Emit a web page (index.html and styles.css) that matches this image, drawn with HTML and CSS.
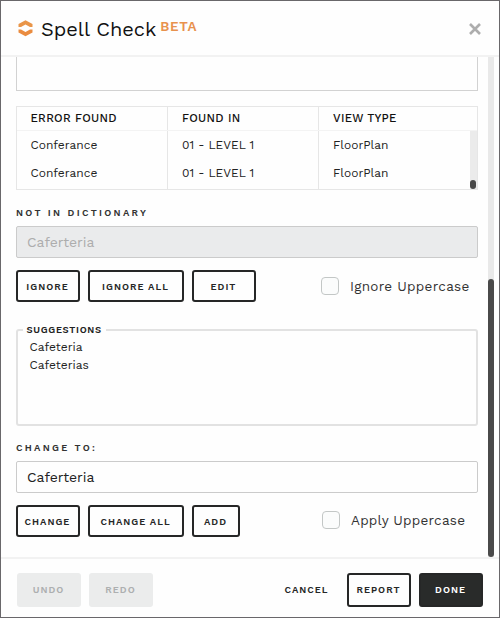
FILE: index.html
```html
<!DOCTYPE html>
<html lang="en">

<head>
  <meta charset="UTF-8">
  <meta name="viewport" content="width=device-width, initial-scale=1">
  <title>Spell Check</title>
  <link rel="stylesheet" href="styles.css">
</head>

<body>
  <div class="dialog">
    <header class="dialog-header">
      <svg class="logo" viewBox="0 0 15 17" aria-hidden="true">
        <path d="M0.5 7V4L7.5 0.3L14.5 4V7H12L7.5 4.6L3 7Z" fill="#e99549" />
        <path d="M0.5 9.4H3L7.5 12L12 9.4H14.5V12.4L7.5 16.3L0.5 12.4Z" fill="#ea8c40" />
      </svg>
      <h1>Spell Check</h1>
      <span class="beta">BETA</span>
      <button class="close" aria-label="Close">
        <svg viewBox="0 0 12 12"><path d="M1 1L11 11M11 1L1 11" /></svg>
      </button>
    </header>

    <div class="dialog-body">
      <main class="content">
        <div class="text-area"></div>

        <div class="table">
          <div class="row head">
            <span>ERROR FOUND</span>
            <span>FOUND IN</span>
            <span>VIEW TYPE</span>
          </div>
          <div class="table-scroll">
            <div class="rows">
              <div class="row">
                <span>Conferance</span>
                <span>01 - LEVEL 1</span>
                <span>FloorPlan</span>
              </div>
              <div class="row">
                <span>Conferance</span>
                <span>01 - LEVEL 1</span>
                <span>FloorPlan</span>
              </div>
            </div>
            <div class="table-track"><div class="table-thumb"></div></div>
          </div>
        </div>

        <div class="label not-in">NOT IN DICTIONARY</div>
        <div class="input disabled">Caferteria</div>

        <div class="actions">
          <button class="btn">IGNORE</button>
          <button class="btn wide">IGNORE ALL</button>
          <button class="btn">EDIT</button>
          <label class="check ignore-check"><span class="box"></span>Ignore Uppercase</label>
        </div>

        <fieldset class="suggestions">
          <legend>SUGGESTIONS</legend>
          <ul>
            <li>Cafeteria</li>
            <li>Cafeterias</li>
          </ul>
        </fieldset>

        <div class="label change-to">CHANGE TO:</div>
        <div class="input">Caferteria</div>

        <div class="actions">
          <button class="btn">CHANGE</button>
          <button class="btn wide">CHANGE ALL</button>
          <button class="btn small">ADD</button>
          <label class="check apply-check"><span class="box"></span>Apply Uppercase</label>
        </div>
      </main>
      <div class="track"><div class="thumb"></div></div>
    </div>

    <footer class="dialog-footer">
      <button class="btn muted">UNDO</button>
      <button class="btn muted">REDO</button>
      <button class="btn plain">CANCEL</button>
      <button class="btn">REPORT</button>
      <button class="btn solid">DONE</button>
    </footer>
  </div>
</body>

</html>
```
FILE: styles.css
```css
/* Reset */

*,
*::before,
*::after {
  box-sizing: border-box;
  margin: 0;
  padding: 0;
}

/* Variables */

:root {
  --dark: #262727;
  --line: #d2d2d2;
  --light-line: #e6e6e6;
  --muted: #ebecec;
  --orange: #e8924e;
}

body {
  font-family: "Work Sans", Inter, "Liberation Sans", sans-serif;
  background: #fff;
  color: #222;
}

button {
  font-family: inherit;
  background: none;
  border: none;
}

/* Dialog */

.dialog {
  display: flex;
  flex-direction: column;
  width: 500px;
  height: 618px;
  border: 1px solid #69676a;
  background: #fefefe;
}

.dialog-header {
  display: flex;
  align-items: center;
  height: 56px;
  padding: 0 17px;
  border-bottom: 2px solid #f2f2f2;
}

.logo {
  width: 15px;
  height: 17px;
}

.dialog-header h1 {
  margin-left: 8px;
  padding-top: 1px;
  font-size: 20px;
  font-weight: 400;
  line-height: 24px;
  letter-spacing: 0;
  color: #111;
}

.beta {
  margin: 0 auto 5px 4px;
  font-size: 13.5px;
  font-weight: 600;
  line-height: 16px;
  letter-spacing: 0.7px;
  color: var(--orange);
}

.close {
  width: 12px;
  height: 12px;
  margin: 2px 1px 0 0;
}

.close svg {
  display: block;
  fill: none;
  stroke: #adadad;
  stroke-width: 2.6;
}

/* Scrolling body */

.dialog-body {
  display: flex;
  flex: 1;
  min-height: 0;
  overflow: hidden;
}

.content {
  width: 477px;
  padding-left: 15px;
}

.track {
  width: 6px;
  margin-left: 10px;
  background: #e9e9e9;
}

.thumb {
  height: 278px;
  margin-top: 222px;
  border-radius: 3px;
  background: #4a4a4a;
}

.text-area {
  height: 34px;
  border: 1px solid var(--line);
  border-top: none;
}

/* Results table */

.table {
  height: 84px;
  margin-top: 15px;
  border: 1px solid var(--light-line);
}

.row {
  display: grid;
  grid-template-columns: 151px 151px 1fr;
  height: 28px;
  font-size: 12px;
  line-height: 28px;
}

.row span {
  padding-left: 14px;
  border-right: 1px solid var(--light-line);
}

.row span:first-child {
  padding-left: 13.5px;
}

.row span:last-child {
  border-right: none;
}

.row.head {
  height: 24px;
  line-height: 23px;
  font-size: 11.5px;
  font-weight: 500;
  letter-spacing: 0.3px;
  color: #111;
  border-bottom: 1px solid #f3f3f3;
}

.table-scroll {
  display: flex;
  height: 58px;
}

.rows {
  flex: 1;
}

.rows .row:last-child {
  height: 30px;
}

.table-track {
  display: flex;
  align-items: flex-end;
  width: 7px;
  background: #ebebeb;
}

.table-thumb {
  width: 6px;
  height: 9px;
  border-radius: 3px;
  background: #484848;
}

/* Fields */

.label {
  height: 12px;
  font-size: 9.5px;
  font-weight: 600;
  line-height: 12px;
  letter-spacing: 2.3px;
  color: #333;
}

.not-in {
  margin: 17px 0 7px;
}

.change-to {
  margin: 16px 0 7px;
}

.input {
  height: 32px;
  padding-left: 10px;
  border: 1px solid #cbcbcb;
  border-radius: 2px;
  font-size: 14px;
  line-height: 31px;
}

.input.disabled {
  background: #eaebec;
  color: #adadad;
}

/* Buttons */

.actions {
  display: flex;
  align-items: center;
  gap: 8px;
  margin-top: 12px;
}

.btn {
  width: 64px;
  height: 32px;
  padding-right: 1px;
  border: 2px solid var(--dark);
  border-radius: 3px;
  font-size: 9.5px;
  font-weight: 600;
  letter-spacing: 1px;
  white-space: nowrap;
  color: var(--dark);
}

.btn.wide {
  width: 96px;
}

.btn.small {
  width: 48px;
}

.check {
  display: flex;
  align-items: center;
  margin-left: auto;
  font-size: 13.5px;
  line-height: 17px;
  letter-spacing: 0.3px;
  white-space: nowrap;
  color: #333;
}

.box {
  width: 18px;
  height: 18px;
  margin-right: 11px;
  border: 1px solid #c3c7c6;
  border-radius: 4px;
  background: #fbfcfc;
}

.ignore-check {
  width: 157px;
}

.apply-check {
  width: 156px;
  margin-bottom: 2px;
  letter-spacing: 0.25px;
}

/* Suggestions */

.suggestions {
  height: 103px;
  margin-top: 21px;
  padding: 1px 11.5px;
  border: 2px solid #e2e2e2;
  border-radius: 3px;
}

.suggestions legend {
  height: 14px;
  margin-left: -7px;
  padding: 0 4px;
  font-size: 9.5px;
  font-weight: 600;
  line-height: 14px;
  letter-spacing: 0.7px;
}

.suggestions ul {
  list-style: none;
  font-size: 12px;
  line-height: 18px;
}

/* Footer */

.dialog-footer {
  display: flex;
  gap: 8px;
  height: 60px;
  padding: 14px 16px 0;
  border-top: 2px solid #f2f2f2;
}

.dialog-footer .btn {
  height: 34px;
  padding-bottom: 1px;
}

.dialog-footer .muted {
  border-color: var(--muted);
  background: var(--muted);
  color: #adafb0;
}

.dialog-footer .plain {
  margin-left: auto;
  border-color: transparent;
}

.dialog-footer .solid {
  background: #292b2a;
  color: #fff;
}
```
